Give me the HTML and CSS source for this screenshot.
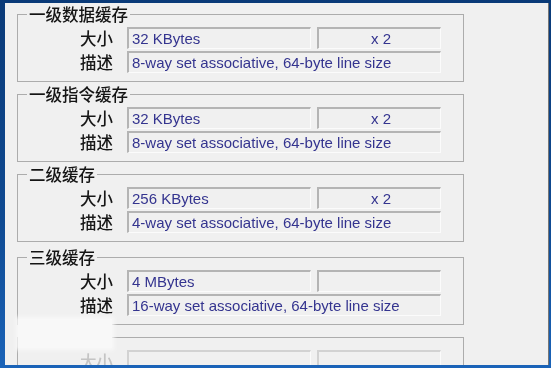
FILE: index.html
```html
<!DOCTYPE html>
<html lang="zh-CN">
<head>
    <meta charset="UTF-8">
    <title>缓存</title>
    <link rel="stylesheet" href="styles.css">
</head>
<body>

<div class="window">

    <fieldset class="group">
        <legend>一级数据缓存</legend>
        <div class="rows">
            <span class="label">大小</span>
            <span class="field">32 KBytes</span>
            <span class="field count">x 2</span>
            <span class="label">描述</span>
            <span class="field desc">8-way set associative, 64-byte line size</span>
        </div>
    </fieldset>

    <fieldset class="group">
        <legend>一级指令缓存</legend>
        <div class="rows">
            <span class="label">大小</span>
            <span class="field">32 KBytes</span>
            <span class="field count">x 2</span>
            <span class="label">描述</span>
            <span class="field desc">8-way set associative, 64-byte line size</span>
        </div>
    </fieldset>

    <fieldset class="group">
        <legend>二级缓存</legend>
        <div class="rows">
            <span class="label">大小</span>
            <span class="field">256 KBytes</span>
            <span class="field count">x 2</span>
            <span class="label">描述</span>
            <span class="field desc">4-way set associative, 64-byte line size</span>
        </div>
    </fieldset>

    <fieldset class="group shifted">
        <legend>三级缓存</legend>
        <div class="rows">
            <span class="label">大小</span>
            <span class="field">4 MBytes</span>
            <span class="field count"></span>
            <span class="label">描述</span>
            <span class="field desc">16-way set associative, 64-byte line size</span>
        </div>
    </fieldset>

    <fieldset class="group disabled">
        <legend>&nbsp;</legend>
        <div class="rows">
            <span class="label">大小</span>
            <span class="field"></span>
            <span class="field count"></span>
        </div>
    </fieldset>

    <div class="smudge"></div>
</div>

</body>
</html>
```

FILE: styles.css
```css
body {
    margin: 0;
    height: 368px;
    overflow: hidden;
    background: linear-gradient(#0a3a78, #0f4a92 60%, #1a63b8);
}
.window {
    position: relative;
    box-sizing: border-box;
    margin: 3px 0 0 5px;
    width: 544px;
    height: 362px;
    padding: 2px 0 0 12px;
    background: #f0f0f0;
    border-right: 1px solid #767676;
    overflow: hidden;
    filter: blur(0.3px);
}
.group {
    box-sizing: border-box;
    width: 447px;
    margin: 0 0 3px 0;
    padding: 0 0 8px 0;
    border: 1px solid #acacac;
}
.group.shifted {
    margin-top: 6px;
}
.group legend {
    margin-left: 9px;
    padding: 0 2px;
    font-family: "Noto Sans CJK SC", sans-serif;
    font-size: 16.5px;
    font-weight: 500;
    line-height: 18px;
    color: #141414;
}
.rows {
    display: grid;
    grid-template-columns: 109px 184px 130px;
    grid-auto-rows: 22px;
    row-gap: 2px;
    padding-top: 4px;
}
.label {
    padding-right: 14px;
    text-align: right;
    font-family: "Noto Sans CJK SC", sans-serif;
    font-size: 16.5px;
    font-weight: 500;
    line-height: 22px;
    color: #161616;
}
.field {
    box-sizing: border-box;
    height: 22px;
    padding-left: 3px;
    border-top: 2px solid #b4b4b4;
    border-left: 2px solid #b4b4b4;
    border-right: 1px solid #fbfbfb;
    border-bottom: 1px solid #fbfbfb;
    font-family: "Liberation Sans", Arial, sans-serif;
    font-size: 15px;
    line-height: 19px;
    color: #34348f;
    white-space: nowrap;
}
.count {
    margin-left: 6px;
    text-align: center;
}
.desc {
    grid-column: span 2;
}
.disabled .label {
    color: #c4c4c4;
}
.disabled .field {
    border-top-color: #d2d2d2;
    border-left-color: #d2d2d2;
}
.smudge {
    position: absolute;
    left: 13px;
    top: 316px;
    width: 94px;
    height: 29px;
    background: #f8f8f8;
    box-shadow: 0 0 4px 2px #f8f8f8;
}
```
